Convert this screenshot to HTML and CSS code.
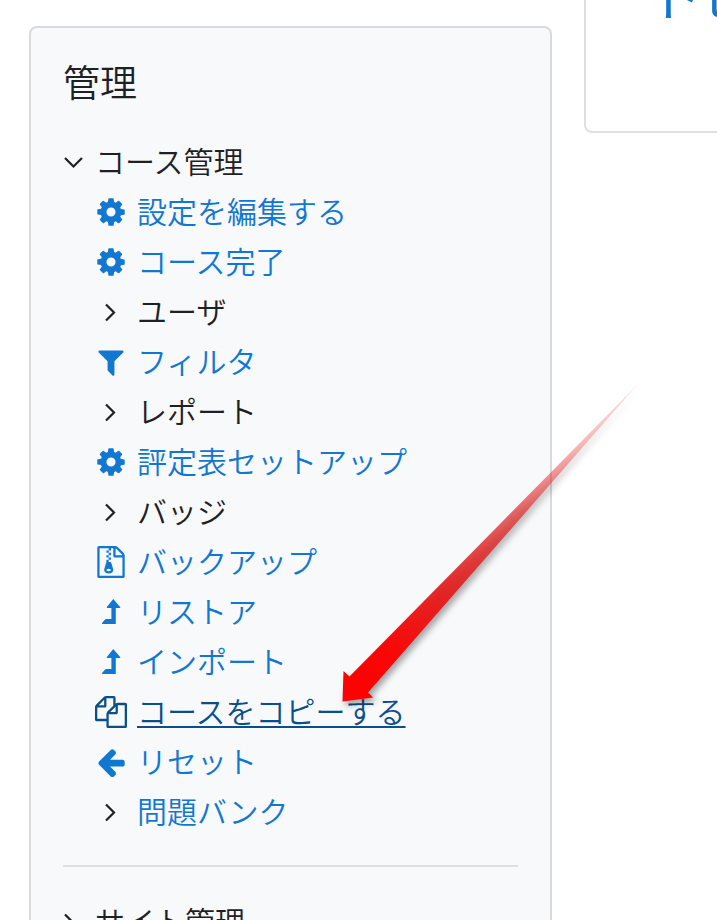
FILE: index.html
```
<!DOCTYPE html>
<html lang="ja">
<head>
    <meta charset="UTF-8">
    <meta name="viewport" content="width=device-width, initial-scale=1.0">
    <title>管理</title>
    <link rel="stylesheet" href="styles.css">
</head>
<body>
    <!-- shared icons -->
    <svg class="sprite" aria-hidden="true">
        <symbol id="cog" viewBox="0 0 1792 1792"><path d="M1152 896q0-106-75-181t-181-75-181 75-75 181 75 181 181 75 181-75 75-181zm512-109v222q0 12-8 23t-20 13l-185 28q-19 54-39 91 35 50 107 138 10 12 10 25t-9 23q-27 37-99 108t-94 71q-12 0-26-9l-138-108q-44 23-91 38-16 136-29 186-7 28-36 28h-222q-14 0-24.5-8.5t-11.5-21.5l-28-184q-49-16-90-37l-141 107q-10 9-25 9-14 0-25-11-126-114-165-168-7-10-7-23 0-12 8-23 15-21 51-66.5t54-70.5q-27-50-41-99l-183-27q-13-2-21-12.5t-8-23.5v-222q0-12 8-23t19-13l186-28q14-46 39-92-40-57-107-138-10-12-10-24 0-10 9-23 26-36 98.5-107.5t94.5-71.5q13 0 26 10l138 107q44-23 91-38 16-136 29-186 7-28 36-28h222q14 0 24.5 8.5t11.5 21.5l28 184q49 16 90 37l142-107q9-9 24-9 13 0 25 10 129 119 165 170 7 8 7 22 0 12-8 23-15 21-51 66.5t-54 70.5q26 50 41 98l183 28q13 2 21 12.5t8 23.5z"/></symbol>
        <symbol id="filter" viewBox="0 0 1792 1792"><path d="M1595 295q17 41-14 70l-493 493v742q0 42-39 59-13 5-25 5-27 0-45-19l-256-256q-19-19-19-45v-486l-493-493q-31-29-14-70 17-39 59-39h1280q42 0 59 39z"/></symbol>
        <symbol id="zip" viewBox="0 0 1792 1792"><path d="M768 384v-128h-128v128h128zm128 128v-128h-128v128h128zm-128 128v-128h-128v128h128zm128 128v-128h-128v128h128zm700-388q28 28 48 76t20 88v1152q0 40-28 68t-68 28h-1344q-40 0-68-28t-28-68v-1600q0-40 28-68t68-28h896q40 0 88 20t76 48zm-444-244v376h376q-10-29-22-41l-313-313q-12-12-41-22zm384 1528v-1024h-416q-40 0-68-28t-28-68v-416h-128v128h-128v-128h-512v1536h1280zm-627-721l107 349q8 27 8 52 0 83-72.5 137.5t-183.5 54.5-183.5-54.5-72.5-137.5q0-25 8-52 21-63 120-396v-128h128v128h79q22 0 39 13t23 34zm-141 465q53 0 90.5-19t37.5-45-37.5-45-90.5-19-90.5 19-37.5 45 37.5 45 90.5 19z"/></symbol>
        <symbol id="level-up" viewBox="0 0 32 32"><path d="M18.3 3l7 8.2q.2.8-.6.8h-3.9v15.4q0 .6-.6.6H7.4q-.8-.2-.3-.9l3-3.6q.3-.4.8-.4h5.500V12h-4q-.9-.1-.6-.9z"/></symbol>
        <symbol id="copy" viewBox="0 0 1792 1792"><path d="M1696 384q40 0 68 28t28 68v1216q0 40-28 68t-68 28h-960q-40 0-68-28t-28-68v-288h-544q-40 0-68-28t-28-68v-672q0-40 20-88t48-76l408-408q28-28 76-48t88-20h416q40 0 68 28t28 68v328q68-40 128-40h416zm-544 213l-299 299h299v-299zm-640-384l-299 299h299v-299zm196 647l316-316v-416h-384v416q0 40-28 68t-68 28h-416v640h512v-256q0-40 20-88t48-76zm956 804v-1152h-384v416q0 40-28 68t-68 28h-416v640h896z"/></symbol>
        <symbol id="arrow-left" viewBox="0 0 1792 1792"><path d="M1664 896v128q0 53-32.5 90.5t-84.5 37.5h-704l293 294q38 36 38 90t-38 90l-75 76q-37 37-90 37-52 0-91-37l-651-652q-37-37-37-90 0-52 37-91l651-650q38-38 91-38 52 0 90 38l75 74q38 38 38 91t-38 91l-293 293h704q52 0 84.5 37.5t32.5 90.5z"/></symbol>
        <symbol id="right" viewBox="0 0 32 32"><path d="M11 8.500l8 8L11 24.500" fill="none" stroke="currentColor" stroke-width="2.200"/></symbol>
        <symbol id="down" viewBox="0 0 22 32"><path d="M2 12l8.500 8.500L19 12" fill="none" stroke="currentColor" stroke-width="2.200"/></symbol>
        <symbol id="right-small" viewBox="0 0 22 32"><path d="M2 8.500l8 8L2 24.500" fill="none" stroke="currentColor" stroke-width="2.200"/></symbol>
    </svg>

    <div class="page">
        <aside class="block">
            <h2>管理</h2>
            <button class="row" aria-expanded="true"><svg class="icon narrow"><use href="#down"/></svg><span>コース管理</span></button>
            <ul class="tree">
                <li><a class="row" href="#"><svg class="icon"><use href="#cog"/></svg><span>設定を編集する</span></a></li>
                <li><a class="row" href="#"><svg class="icon"><use href="#cog"/></svg><span>コース完了</span></a></li>
                <li><button class="row" aria-expanded="false"><svg class="icon"><use href="#right"/></svg><span>ユーザ</span></button></li>
                <li><a class="row" href="#"><svg class="icon"><use href="#filter"/></svg><span>フィルタ</span></a></li>
                <li><button class="row" aria-expanded="false"><svg class="icon"><use href="#right"/></svg><span>レポート</span></button></li>
                <li><a class="row" href="#"><svg class="icon"><use href="#cog"/></svg><span>評定表セットアップ</span></a></li>
                <li><button class="row" aria-expanded="false"><svg class="icon"><use href="#right"/></svg><span>バッジ</span></button></li>
                <li><a class="row" href="#"><svg class="icon"><use href="#zip"/></svg><span>バックアップ</span></a></li>
                <li><a class="row" href="#"><svg class="icon"><use href="#level-up"/></svg><span>リストア</span></a></li>
                <li><a class="row" href="#"><svg class="icon"><use href="#level-up"/></svg><span>インポート</span></a></li>
                <li><a class="row current" href="#"><svg class="icon"><use href="#copy"/></svg><span>コースをコピーする</span></a></li>
                <li><a class="row" href="#"><svg class="icon"><use href="#arrow-left"/></svg><span>リセット</span></a></li>
                <li><a class="row" href="#"><svg class="icon dark"><use href="#right"/></svg><span>問題バンク</span></a></li>
            </ul>
            <hr>
            <button class="row" aria-expanded="false"><svg class="icon narrow"><use href="#right-small"/></svg><span>サイト管理</span></button>
        </aside>
        <main class="topic">
            <a href="#">トピ</a>
        </main>

        <!-- arrow pointing at the copy link -->
        <svg class="pointer" viewBox="0 0 320 340" aria-hidden="true">
            <defs>
                <linearGradient id="fade" gradientUnits="userSpaceOnUse" x1="12" y1="331" x2="308" y2="14">
                    <stop offset="0" stop-color="#ff0000"/>
                    <stop offset="0.15" stop-color="#fa0606"/>
                    <stop offset="0.35" stop-color="#e41a1a" stop-opacity="0.93"/>
                    <stop offset="0.6" stop-color="#e02020" stop-opacity="0.66"/>
                    <stop offset="0.8" stop-color="#f03030" stop-opacity="0.35"/>
                    <stop offset="1" stop-color="#ff3030" stop-opacity="0.15"/>
                </linearGradient>
            </defs>
            <path d="M12.500 331.500l1-30.500 6 5.500L308 14 38 322.500l5.300 5z" fill="url(#fade)"/>
        </svg>
    </div>
</body>
</html>
```
FILE: styles.css
```
* {
    box-sizing: border-box;
}

body {
    margin: 0;
    background-color: #fff;
    color: #1d2125;
    font-family: "Noto Sans CJK JP", sans-serif;
    font-size: 30px;
    font-weight: 350;
}

.sprite {
    position: absolute;
    width: 0;
    height: 0;
}

.page {
    position: relative;
    display: flex;
    align-items: flex-start;
    gap: 32px;
    height: 100vh;
    padding-left: 29px;
    overflow: hidden;
}

.block {
    flex: 0 0 76%;
    margin-top: 26px;
    padding: 32px;
    background-color: #f8f9fb;
    border: 2px solid #d8dadc;
    border-radius: 8px;
}

h2 {
    margin: 0 0 34px;
    font-size: 37px;
    font-weight: 350;
    line-height: 43px;
}

.tree {
    margin: 0;
    padding: 0 0 0 32px;
    list-style: none;
}

.row {
    display: flex;
    align-items: center;
    gap: 10px;
    width: 100%;
    height: 50px;
    padding: 0;
    border: none;
    background: none;
    color: #1d2125;
    font: inherit;
    line-height: 46px;
    white-space: nowrap;
    text-align: left;
    text-decoration: none;
    cursor: pointer;
}

.row span {
    padding-bottom: 4px;
}

a.row {
    color: #1177d1;
}

a.row.current {
    color: #0b4f8a;
}

.current span {
    text-decoration: underline;
    text-decoration-thickness: 2px;
    text-underline-offset: 3px;
}

.icon {
    flex: none;
    width: 32px;
    height: 32px;
    fill: currentColor;
}

.icon.narrow {
    width: 22px;
}

.icon.dark {
    color: #1d2125;
}

hr {
    height: 2px;
    margin: 28px 0 30px;
    border: none;
    background-color: #dddfe1;
}

.topic {
    flex: 1;
    height: 133px;
    padding-left: 62px;
    border: 2px solid #dfdfdf;
    border-width: 0 0 2px 2px;
    border-radius: 0 0 0 8px;
    overflow: hidden;
}

.topic a {
    display: block;
    margin-top: -38px;
    color: #1177d1;
    font-size: 54px;
    font-weight: 400;
    line-height: 64px;
    white-space: nowrap;
    text-decoration: none;
}

.pointer {
    position: absolute;
    top: 370px;
    left: 330px;
    width: 320px;
    height: 340px;
    filter: drop-shadow(3px 4px 3px rgba(0, 0, 0, 0.35));
    pointer-events: none;
}
```
